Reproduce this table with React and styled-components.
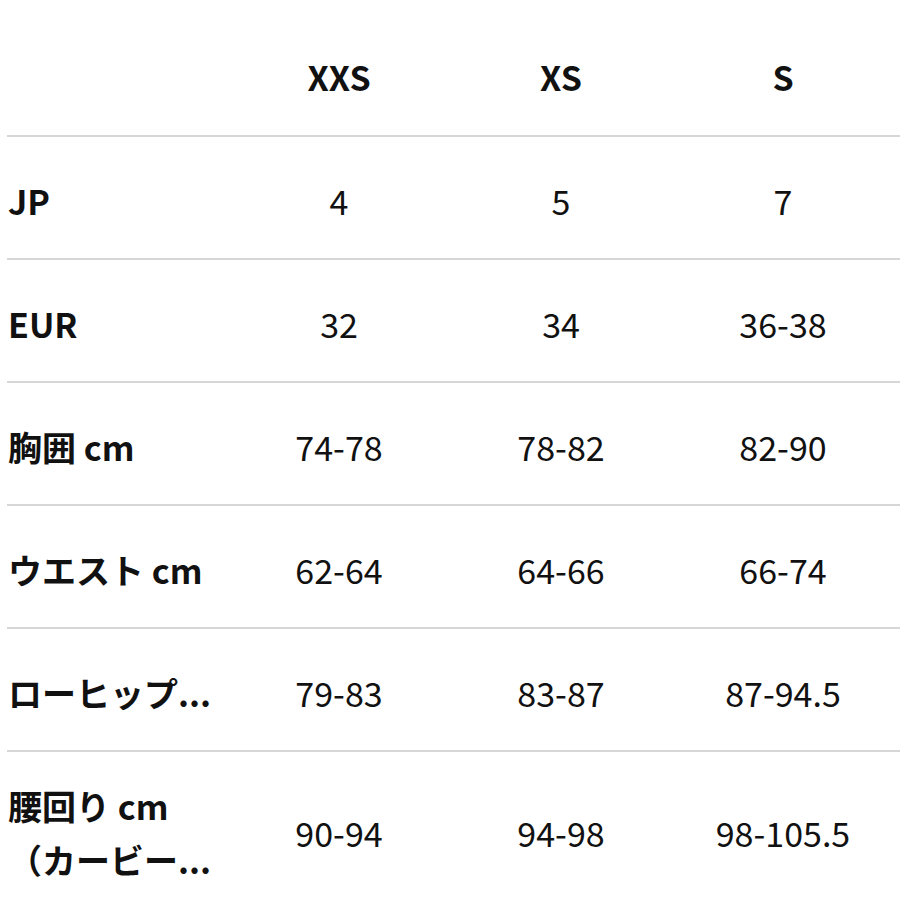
import React from 'react';
import styled, { createGlobalStyle } from 'styled-components';

const GlobalStyle = createGlobalStyle`
  html, body {
    margin: 0;
    padding: 0;
    background: #ffffff;
  }
  body {
    font-family: "Noto Sans CJK JP", "Noto Sans", sans-serif;
    color: #111111;
    overflow: hidden;
  }
`;

const Table = styled.div`
  display: flex;
  flex-direction: column;
  margin-left: 7px;
`;

const Row = styled.div`
  display: grid;
  grid-template-columns: 221px repeat(3, 222px);
  align-items: ${(p) => (p.$head ? 'end' : 'center')};
  min-height: ${(p) => (p.$head ? '135px' : '123px')};
  padding: ${(p) => (p.$head ? '0 0 31px' : p.$tall ? '27px 0 27px' : '31px 0 25px')};
  box-sizing: border-box;
  border-top: ${(p) => (p.$head ? 'none' : '2px solid #d6d6d6')};
`;

const HeadCell = styled.div`
  font-size: 34px;
  font-weight: 700;
  text-align: center;
  line-height: 54px;
`;

const Label = styled.div`
  font-size: 34px;
  font-weight: 700;
  line-height: 54px;
  padding-left: 1px;
  white-space: nowrap;
`;

const Value = styled.div`
  font-size: 34px;
  font-weight: 400;
  text-align: center;
  line-height: 54px;
  white-space: nowrap;
`;

const sizes = ['XXS', 'XS', 'S'];

const rows = [
  { label: ['JP'], values: ['4', '5', '7'] },
  { label: ['EUR'], values: ['32', '34', '36-38'] },
  { label: ['胸囲 cm'], values: ['74-78', '78-82', '82-90'] },
  { label: ['ウエスト cm'], values: ['62-64', '64-66', '66-74'] },
  { label: ['ローヒップ...'], values: ['79-83', '83-87', '87-94.5'] },
  { label: ['腰回り cm', '（カービー...'], values: ['90-94', '94-98', '98-105.5'] },
];

export default function App() {
  return (
    <>
      <GlobalStyle />
      <Table>
        <Row $head>
          <div />
          {sizes.map((s) => (
            <HeadCell key={s}>{s}</HeadCell>
          ))}
        </Row>
        {rows.map((r) => (
          <Row key={r.label[0]} $tall={r.label.length > 1}>
            <div>
              {r.label.map((line) => (
                <Label key={line}>{line}</Label>
              ))}
            </div>
            {r.values.map((v, i) => (
              <Value key={i}>{v}</Value>
            ))}
          </Row>
        ))}
      </Table>
    </>
  );
}
